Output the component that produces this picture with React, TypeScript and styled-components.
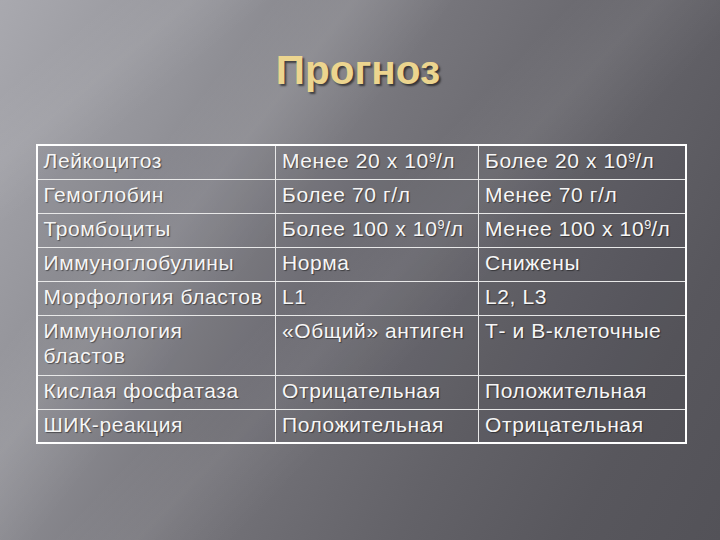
import React from 'react';
import styled, { createGlobalStyle } from 'styled-components';

interface Row {
  label: string;
  good: React.ReactNode;
  bad: React.ReactNode;
  tall?: boolean;
}

const GlobalStyle = createGlobalStyle`
  html, body {
    margin: 0;
    padding: 0;
    background: #5d5c62;
  }
  * {
    box-sizing: border-box;
  }
`;

const Sup = styled.span`
  font-size: 0.6em;
  position: relative;
  top: -0.5em;
  letter-spacing: 0;
`;

const Power = () => (
  <>
    10<Sup>9</Sup>/л
  </>
);

const rows: Row[] = [
  { label: 'Лейкоцитоз', good: <>Менее 20 х <Power /></>, bad: <>Более 20 х <Power /></> },
  { label: 'Гемоглобин', good: 'Более 70 г/л', bad: 'Менее 70 г/л' },
  { label: 'Тромбоциты', good: <>Более 100 х <Power /></>, bad: <>Менее 100 х <Power /></> },
  { label: 'Иммуноглобулины', good: 'Норма', bad: 'Снижены' },
  { label: 'Морфология бластов', good: 'L1', bad: 'L2, L3' },
  { label: 'Иммунология бластов', good: '«Общий» антиген', bad: 'Т- и В-клеточные', tall: true },
  { label: 'Кислая фосфатаза', good: 'Отрицательная', bad: 'Положительная' },
  { label: 'ШИК-реакция', good: 'Положительная', bad: 'Отрицательная' },
];

const App: React.FC = () => {
  return (
    <>
      <GlobalStyle />
      <Slide>
        <Title>Прогноз</Title>
        <Table>
          <tbody>
            {rows.map((row) => (
              <tr key={row.label}>
                <Cell $width={239} $tall={row.tall}>
                  {row.tall ? (
                    <>
                      Иммунология
                      <br />
                      бластов
                    </>
                  ) : (
                    row.label
                  )}
                </Cell>
                <Cell $width={203} $tall={row.tall}>{row.good}</Cell>
                <Cell $width={207} $tall={row.tall}>{row.bad}</Cell>
              </tr>
            ))}
          </tbody>
        </Table>
      </Slide>
    </>
  );
};

// Styled Components

const Slide = styled.div`
  width: 720px;
  height: 540px;
  overflow: hidden;
  display: flex;
  flex-direction: column;
  align-items: center;
  padding-top: 46px;
  font-family: 'Liberation Sans', Arial, sans-serif;
  background:
    linear-gradient(128deg, transparent 24%, rgba(255, 255, 255, 0.09) 31%, transparent 40%),
    linear-gradient(134deg, transparent 46%, rgba(255, 255, 255, 0.06) 53%, transparent 61%),
    linear-gradient(140deg, transparent 8%, rgba(255, 255, 255, 0.06) 14%, transparent 20%),
    linear-gradient(118deg, #a9a9af 0%, #939399 22%, #76757b 45%, #636268 68%, #58575d 85%, #535258 100%);
`;

const Title = styled.h1`
  margin: 0 0 0 -4px;
  font-size: 40.5px;
  line-height: 48px;
  font-weight: bold;
  color: #ecd58f;
  text-shadow: 2px 2px 2px rgba(0, 0, 0, 0.55);
`;

const Table = styled.table`
  margin-top: 50px;
  margin-left: 2px;
  border-collapse: collapse;
  border: 2px solid #ffffff;
  background: rgba(40, 40, 46, 0.08);
`;

const Cell = styled.td<{ $width: number; $tall?: boolean }>`
  width: ${({ $width }) => $width}px;
  height: ${({ $tall }) => ($tall ? 60 : 34)}px;
  padding: 2px 5px 0 6px;
  vertical-align: top;
  border: 1px solid #e8e8e8;
  font-size: 21px;
  line-height: 25px;
  letter-spacing: 0.6px;
  color: #f6f6f6;
  white-space: nowrap;
  text-shadow: 1px 1px 1px rgba(0, 0, 0, 0.45);
`;

export default App;
